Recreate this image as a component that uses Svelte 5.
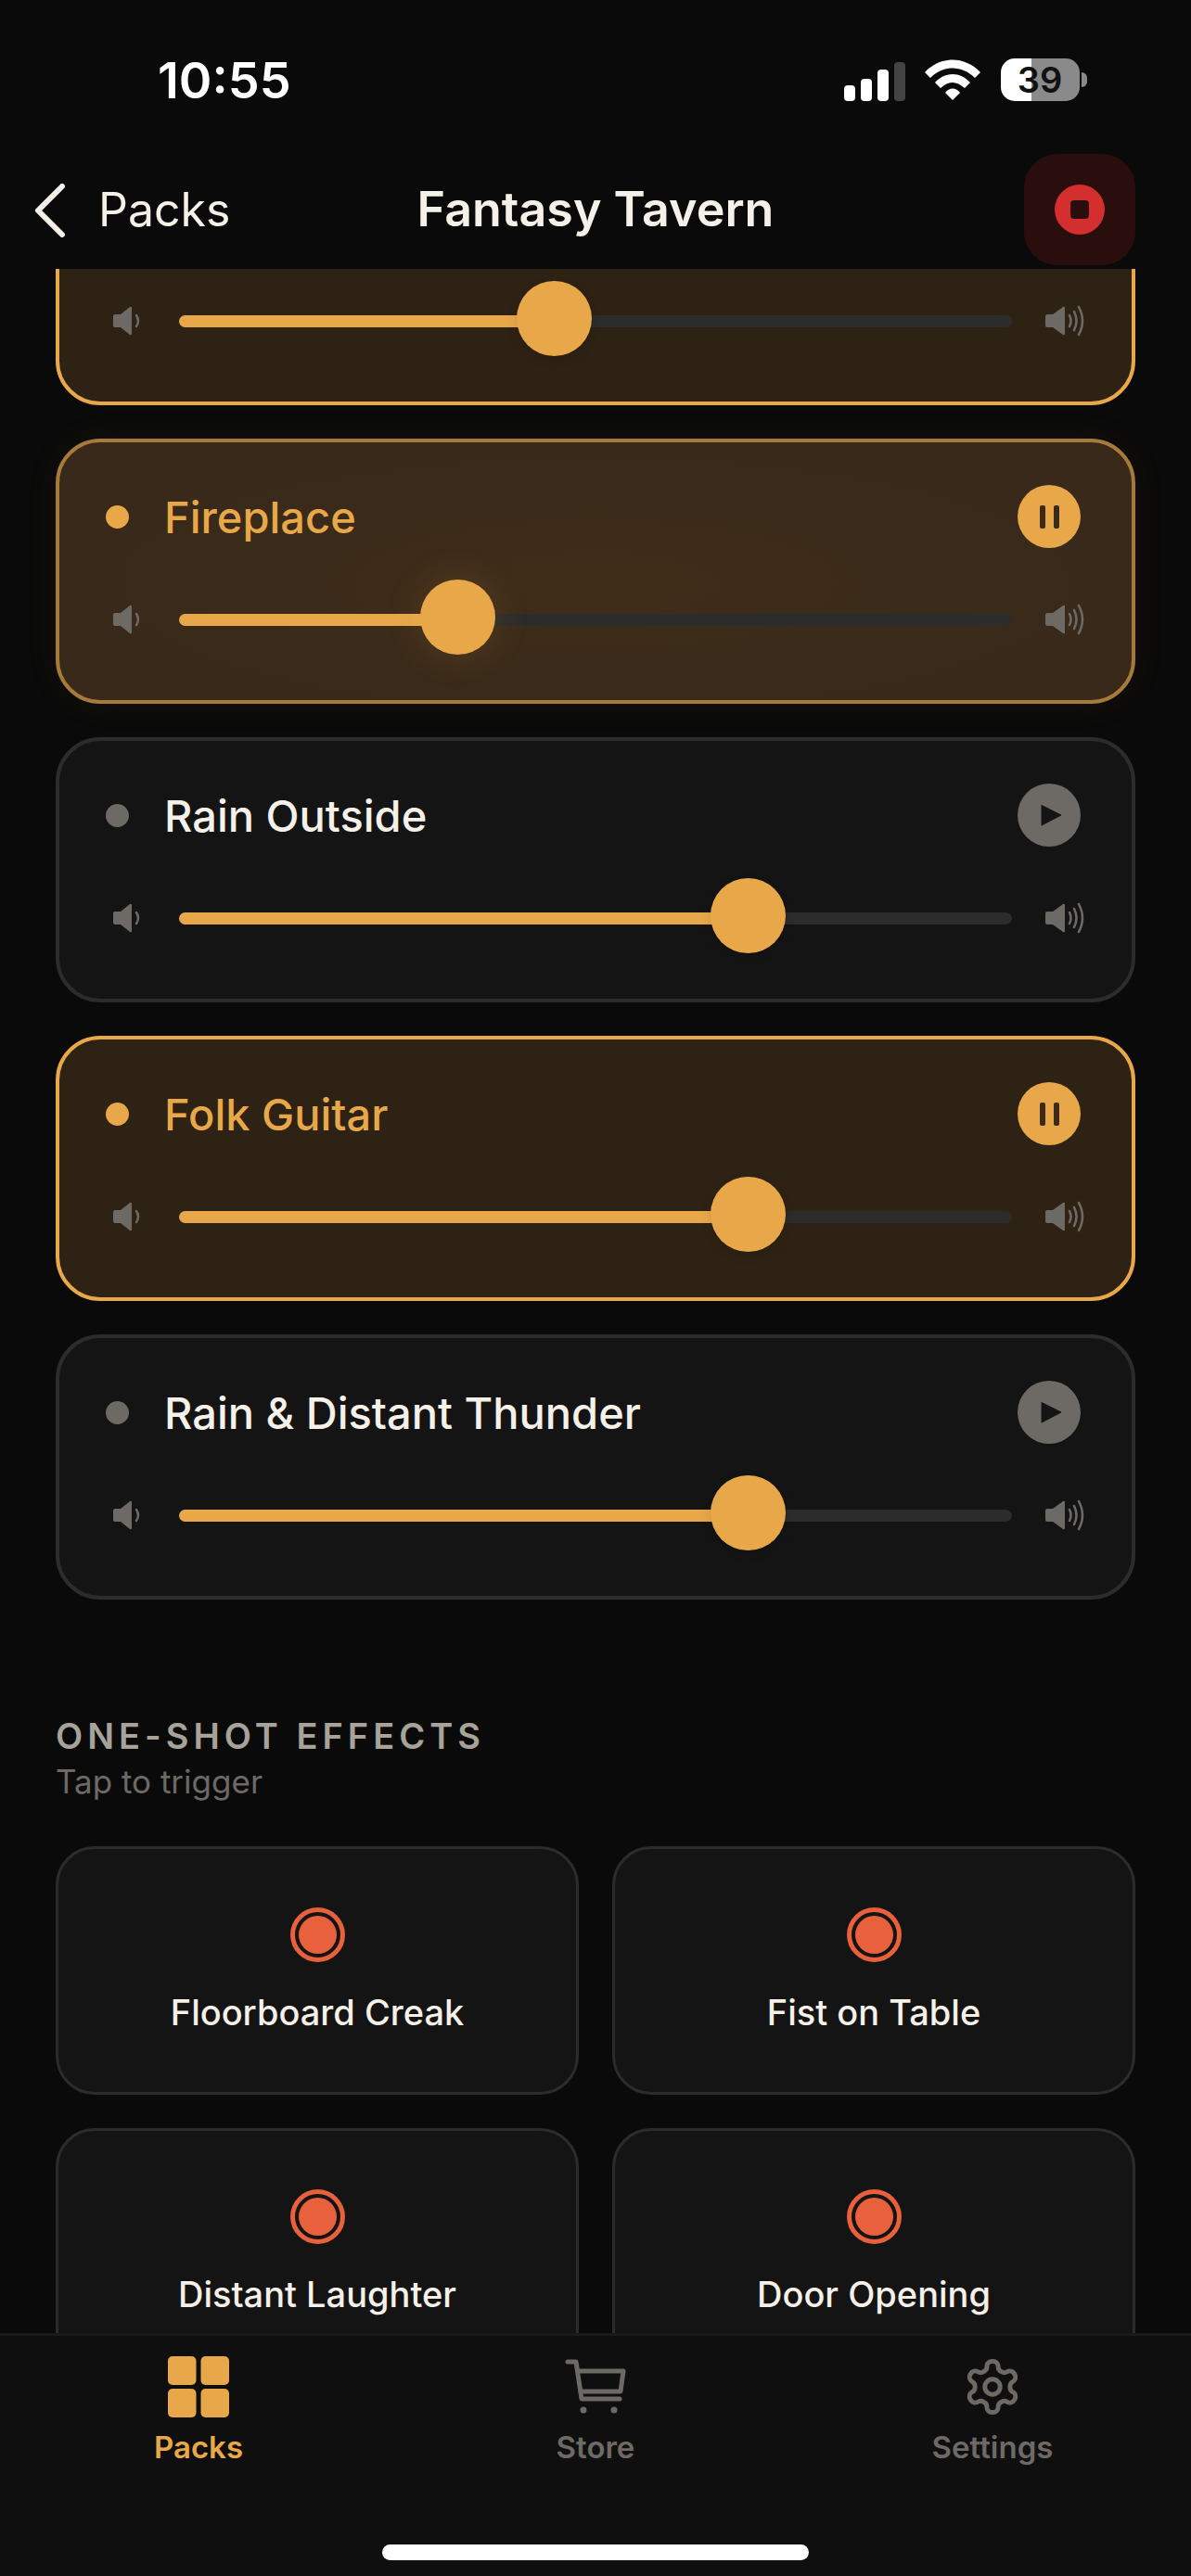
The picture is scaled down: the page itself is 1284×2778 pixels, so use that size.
<script>
  const trackCards = [
    { name: "Tavern Ambience", value: 0.45, state: "on" },
    { name: "Fireplace", value: 0.334, state: "glow" },
    { name: "Rain Outside", value: 0.683, state: "off" },
    { name: "Folk Guitar", value: 0.683, state: "on" },
    { name: "Rain & Distant Thunder", value: 0.683, state: "off" },
  ];

  const effects = ["Floorboard Creak", "Fist on Table", "Distant Laughter", "Door Opening"];

  const tabs = [
    { label: "Packs", icon: "grid", active: true },
    { label: "Store", icon: "cart" },
    { label: "Settings", icon: "gear" },
  ];
</script>

<div class="screen">
  <header class="status">
    <span class="time">10:55</span>
    <div class="indicators">
      <div class="signal">
        <i class="b1"></i><i class="b2"></i><i class="b3"></i><i class="b4"></i>
      </div>
      <svg class="wifi" viewBox="0 0 60 44" width="60" height="44">
        <path d="M0 14 C17 -4 43 -4 60 14 L54 20 C40 6 20 6 6 20 Z" fill="#fff" />
        <path d="M11 25 C22 13 38 13 49 25 L43 31 C34 23 26 23 17 31 Z" fill="#fff" />
        <path d="M22 36 C26 30 34 30 38 36 L30 44 Z" fill="#fff" />
      </svg>
      <div class="battery">
        <div class="cell"><span>39</span></div>
        <div class="nub"></div>
      </div>
    </div>
  </header>

  <nav class="topbar">
    <div class="back">
      <svg viewBox="0 0 36 58" width="36" height="58">
        <path d="M31 3 L5 29 L31 55" fill="none" stroke="#f5f0e8" stroke-width="6" stroke-linecap="round" stroke-linejoin="round" />
      </svg>
      <span>Packs</span>
    </div>
    <h1>Fantasy Tavern</h1>
    <button class="stop"><span class="stop-dot"><i></i></span></button>
  </nav>

  <main class="scroller">
    <div class="content">
      <section class="tracks">
        {#each trackCards as track}
          <article class="track {track.state}">
            <div class="track-head">
              <span class="dot"></span>
              <span class="name">{track.name}</span>
              <span class="toggle">
                {#if track.state === "off"}
                  <svg viewBox="0 0 24 24" width="24" height="26"><path d="M2 1.5 L23 12 L2 23 Z" fill="#141414" stroke="#141414" stroke-width="1" stroke-linejoin="round" /></svg>
                {:else}
                  <i></i><i></i>
                {/if}
              </span>
            </div>
            <div class="volume">
              <svg class="spk-low" viewBox="0 0 31 32" width="31" height="32">
                <path d="M1 11 Q1 9 3 9 L9 9 L19 1 Q21 0 21 2 L21 30 Q21 32 19 31 L9 23 L3 23 Q1 23 1 21 Z" fill="#6d6964" />
                <path d="M26 10 Q30 16 26 22" fill="none" stroke="#6d6964" stroke-width="2.5" stroke-linecap="round" />
              </svg>
              <div class="slider">
                <div class="fill" style="width: {track.value * 100}%"></div>
                <div class="thumb" style="left: {track.value * 100}%"></div>
              </div>
              <svg class="spk-high" viewBox="0 0 44 34" width="44" height="34">
                <path d="M1 12 Q1 10 3 10 L9 10 L20 2 Q22 1 22 3 L22 31 Q22 33 20 32 L9 24 L3 24 Q1 24 1 22 Z" fill="#6d6964" />
                <g fill="none" stroke="#6d6964" stroke-width="2.6" stroke-linecap="round">
                  <path d="M27 11 Q30 17 27 23" />
                  <path d="M32 7 Q37 17 32 27" />
                  <path d="M37 2 Q45 17 37 32" />
                </g>
              </svg>
            </div>
          </article>
        {/each}
      </section>

      <section class="effects">
        <h2>ONE-SHOT EFFECTS</h2>
        <p>Tap to trigger</p>
        <div class="effect-grid">
          {#each effects as effect}
            <button class="effect">
              <span class="ring"><i></i></span>
              <span class="effect-name">{effect}</span>
            </button>
          {/each}
        </div>
      </section>
    </div>
  </main>

  <footer class="tabs">
    <div class="tab-row">
      {#each tabs as tab}
        <div class="tab" class:active={tab.active}>
          {#if tab.icon === "grid"}
            <svg viewBox="0 0 66 66" width="66" height="66" fill="#e8a84a">
              <rect x="0" y="0" width="30.5" height="31" rx="5" />
              <rect x="35.5" y="0" width="30.5" height="31" rx="5" />
              <rect x="0" y="35" width="30.5" height="31" rx="5" />
              <rect x="35.5" y="35" width="30.5" height="31" rx="5" />
            </svg>
          {:else if tab.icon === "cart"}
            <svg viewBox="0 0 66 66" width="66" height="66" fill="none" stroke="#6d6964" stroke-width="5" stroke-linejoin="round" stroke-linecap="round">
              <path d="M3 6 L12 6 L18 46 L59 46" />
              <path d="M14 16 L63 16 L60 38 L17 38" />
              <circle cx="20" cy="58" r="3.5" fill="#6d6964" stroke="none" />
              <circle cx="53" cy="58" r="3.5" fill="#6d6964" stroke="none" />
            </svg>
          {:else}
            <svg viewBox="0 0 24 24" width="66" height="66" fill="none" stroke="#6d6964" stroke-width="1.8" stroke-linejoin="round" stroke-linecap="round">
              <circle cx="12" cy="12" r="3" />
              <path d="M12.22 2h-.44a2 2 0 0 0-2 2v.18a2 2 0 0 1-1 1.73l-.43.25a2 2 0 0 1-2 0l-.15-.08a2 2 0 0 0-2.73.73l-.22.38a2 2 0 0 0 .73 2.73l.15.1a2 2 0 0 1 1 1.72v.51a2 2 0 0 1-1 1.74l-.15.09a2 2 0 0 0-.73 2.73l.22.38a2 2 0 0 0 2.73.73l.15-.08a2 2 0 0 1 2 0l.43.25a2 2 0 0 1 1 1.73V20a2 2 0 0 0 2 2h.44a2 2 0 0 0 2-2v-.18a2 2 0 0 1 1-1.73l.43-.25a2 2 0 0 1 2 0l.15.08a2 2 0 0 0 2.73-.73l.22-.39a2 2 0 0 0-.73-2.73l-.15-.08a2 2 0 0 1-1-1.74v-.5a2 2 0 0 1 1-1.74l.15-.09a2 2 0 0 0 .73-2.73l-.22-.38a2 2 0 0 0-2.73-.73l-.15.08a2 2 0 0 1-2 0l-.43-.25a2 2 0 0 1-1-1.73V4a2 2 0 0 0-2-2z" />
            </svg>
          {/if}
          <span class="tab-label">{tab.label}</span>
        </div>
      {/each}
    </div>
    <div class="home"></div>
  </footer>
</div>

<style>
  :global(body) {
    background: #0a0a0a;
  }

  .screen {
    width: 1284px;
    height: 2778px;
    display: flex;
    flex-direction: column;
    overflow: hidden;
    background: #0a0a0a;
    color: #f5f0e8;
    font-family: Inter, "Liberation Sans", sans-serif;
  }

  /* status bar */
  .status {
    height: 166px;
    flex: none;
    display: flex;
    justify-content: space-between;
    align-items: flex-start;
    padding: 63px 112px 0 170px;
    box-sizing: border-box;
  }

  .time {
    font-size: 54px;
    line-height: 48px;
    font-weight: 600;
    color: #fff;
  }

  .indicators {
    display: flex;
    align-items: flex-start;
  }

  .signal {
    width: 66px;
    height: 44px;
    margin: 2px 21px 0 0;
    display: flex;
    align-items: flex-end;
    gap: 6px;
  }

  .signal i {
    width: 12px;
    border-radius: 4px;
    background: #fff;
  }

  .b1 { height: 17px; }
  .b2 { height: 24px; }
  .b3 { height: 34px; }
  .b4 { height: 42px; background: #444 !important; }

  .wifi {
    margin: 1px 22px 0 0;
  }

  .battery {
    display: flex;
    align-items: center;
  }

  .cell {
    width: 85px;
    height: 46px;
    border-radius: 15px;
    background: linear-gradient(to right, #fff 33px, #8a8a8a 33px);
    display: flex;
    align-items: center;
    justify-content: center;
    color: #111;
    font-size: 38px;
    font-weight: 600;
  }

  .cell span {
    margin-left: -1px;
  }

  .nub {
    width: 6px;
    height: 16px;
    margin-left: 2px;
    border-radius: 0 8px 8px 0;
    background: #8a8a8a;
  }

  /* nav */
  .topbar {
    height: 124px;
    flex: none;
    position: relative;
    display: flex;
    align-items: flex-start;
    justify-content: space-between;
    padding: 0 60px 0 36px;
  }

  .back {
    display: flex;
    align-items: center;
    gap: 34px;
    height: 120px;
    font-size: 50px;
    color: #f5f0e8;
  }

  .back svg {
    margin-bottom: -2px;
  }

  .topbar h1 {
    position: absolute;
    left: 0;
    right: 0;
    top: 0;
    margin: 0;
    text-align: center;
    font-size: 52px;
    line-height: 120px;
    font-weight: 600;
    pointer-events: none;
  }

  .stop {
    width: 120px;
    height: 120px;
    border: 0;
    padding: 0;
    border-radius: 36px;
    background: #2a0e0e;
    display: flex;
    align-items: center;
    justify-content: center;
  }

  .stop-dot {
    width: 54px;
    height: 54px;
    border-radius: 50%;
    background: #d32f2f;
    display: flex;
    align-items: center;
    justify-content: center;
  }

  .stop-dot i {
    width: 20px;
    height: 20px;
    border-radius: 4px;
    background: #2a0e0e;
  }

  /* scrolled content */
  .scroller {
    flex: 1;
    min-height: 0;
    overflow: hidden;
  }

  .content {
    margin-top: -139px;
    padding: 0 60px;
  }

  .tracks {
    display: flex;
    flex-direction: column;
    gap: 36px;
  }

  .track {
    height: 286px;
    box-sizing: border-box;
    padding: 0 50px;
    border: 4px solid #2c2c2c;
    border-radius: 48px;
    background: #141414;
    display: flex;
    flex-direction: column;
  }

  .track.on {
    background: #2e2214;
    border-color: #e8a84a;
  }

  .track.glow {
    background: radial-gradient(ellipse at 50% 55%, #3f2d19 0%, #38291a 70%);
    border-color: #a67b3a;
    box-shadow: 0 0 40px rgba(232, 168, 74, 0.05);
  }

  .track-head {
    height: 160px;
    flex: none;
    display: flex;
    align-items: center;
    gap: 38px;
    padding-bottom: 0;
  }

  .dot {
    width: 25px;
    height: 25px;
    border-radius: 50%;
    background: #6d6964;
    flex: none;
  }

  .on .dot,
  .glow .dot {
    background: #e8a84a;
  }

  .name {
    flex: 1;
    font-size: 47px;
    font-weight: 500;
    color: #f5f0e8;
  }

  .on .name,
  .glow .name {
    color: #e8a84a;
  }

  .toggle {
    width: 68px;
    height: 68px;
    border-radius: 50%;
    margin-right: 5px;
    background: #6d6964;
    display: flex;
    align-items: center;
    justify-content: center;
    gap: 9px;
    flex: none;
  }

  .on .toggle,
  .glow .toggle {
    background: #e8a84a;
  }

  .toggle i {
    width: 6px;
    height: 25px;
    border-radius: 2px;
    background: #3a2a16;
  }

  .toggle svg {
    margin-left: 4px;
  }

  .volume {
    display: flex;
    align-items: center;
    margin-top: 3px;
    height: 56px;
  }

  .spk-low {
    flex: none;
    margin-left: 7px;
  }

  .spk-high {
    flex: none;
    margin-right: 0;
  }

  .slider {
    position: relative;
    flex: 1;
    height: 13px;
    margin: 0 35px 0 41px;
    border-radius: 7px;
    background: #2c2c2c;
  }

  .fill {
    height: 100%;
    border-radius: 7px;
    background: #e8a84a;
  }

  .thumb {
    position: absolute;
    top: -37px;
    width: 81px;
    height: 81px;
    margin-left: -40px;
    border-radius: 50%;
    background: #e8a84a;
    box-shadow: 0 4px 12px rgba(0, 0, 0, 0.12);
  }

  .glow .thumb {
    box-shadow: 0 0 40px rgba(232, 168, 74, 0.15);
  }

  /* effects */
  .effects {
    padding-top: 124px;
  }

  .effects h2 {
    margin: 0;
    font-size: 38px;
    line-height: 46px;
    font-weight: 600;
    letter-spacing: 5px;
    color: #a8a398;
  }

  .effects p {
    margin: 4px 0 0;
    font-size: 35px;
    line-height: 44px;
    color: #6d6964;
  }

  .effect-grid {
    margin-top: 48px;
    display: grid;
    grid-template-columns: 1fr 1fr;
    gap: 36px;
  }

  .effect {
    height: 268px;
    box-sizing: border-box;
    padding: 0;
    border: 3px solid #2c2c2c;
    border-radius: 42px;
    background: #141414;
    color: #f5f0e8;
    font-family: inherit;
    display: flex;
    flex-direction: column;
    align-items: center;
  }

  .ring {
    margin-top: 63px;
    width: 59px;
    height: 59px;
    box-sizing: border-box;
    border: 5px solid #e8603c;
    border-radius: 50%;
    display: flex;
    align-items: center;
    justify-content: center;
  }

  .ring i {
    width: 41px;
    height: 41px;
    border-radius: 50%;
    background: #e8603c;
  }

  .effect-name {
    margin-top: 28px;
    font-size: 38px;
    line-height: 52px;
    font-weight: 500;
  }

  /* tab bar */
  .tabs {
    height: 262px;
    flex: none;
    box-sizing: border-box;
    border-top: 3px solid #1a1a1a;
    background: #0f0f0f;
    display: flex;
    flex-direction: column;
    align-items: center;
  }

  .tab-row {
    width: 100%;
    display: grid;
    grid-template-columns: repeat(3, 1fr);
    padding-top: 22px;
  }

  .tab {
    display: flex;
    flex-direction: column;
    align-items: center;
    color: #6d6964;
  }

  .tab.active {
    color: #e8a84a;
  }

  .tab-label {
    margin-top: 12px;
    font-size: 33px;
    line-height: 40px;
    font-weight: 600;
  }

  .home {
    width: 460px;
    height: 17px;
    margin-top: 85px;
    border-radius: 9px;
    background: #fff;
  }
</style>
